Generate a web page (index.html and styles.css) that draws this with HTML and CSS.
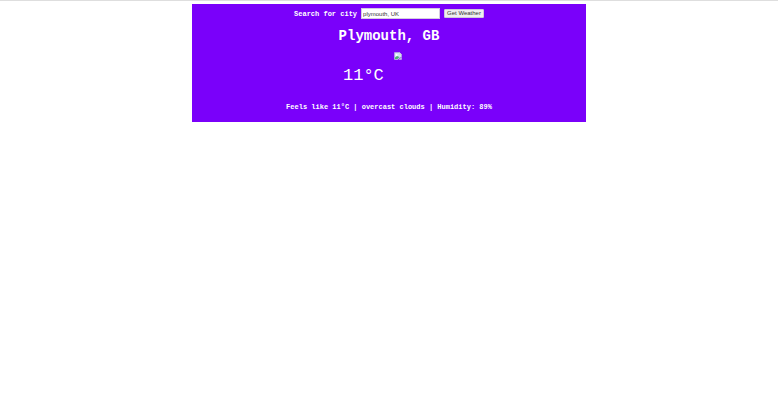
FILE: index.html
```html
<!DOCTYPE html>
<html lang="en">
<head>
<meta charset="utf-8">
<title>Weather</title>
<link rel="stylesheet" href="styles.css">
</head>
<body>
<main class="card">
  <form class="search">
    <label for="city">Search for city</label>
    <input id="city" type="text" value="plymouth, UK">
    <button type="button">Get Weather</button>
  </form>
  <h1 class="place">Plymouth, GB</h1>
  <div class="now">
    <svg class="icon" viewBox="0 0 16 16" aria-hidden="true">
      <path d="M1 1h10l4 4v5l-3 1-3 3-1 1H1z" fill="#d3e3f8" stroke="#b9c3cd"/>
      <path d="M11 1v4h4z" fill="#fff" stroke="#b9c3cd"/>
      <circle cx="5" cy="6" r="2" fill="#fff"/>
      <path d="M2 14v-3l4-3 5 2-4 4z" fill="#4cab75"/>
      <path d="M15 11v4H10z" fill="#d3e3f8" stroke="#b9c3cd"/>
    </svg>
    <p class="temp">11°C</p>
  </div>
  <p class="details">Feels like 11°C | overcast clouds | Humidity: 89%</p>
</main>
</body>
</html>
```
FILE: styles.css
```css
* {
  box-sizing: border-box;
}

body {
  margin: 0;
  padding-top: 3px;
  border-top: 1px solid #dedede;
  background: #fff;
  color: #fff;
  font: 7px/8px "Liberation Mono", monospace;
}

.card {
  width: 50.6%;
  margin: 0 auto;
  padding: 4px 4px 11px;
  background: #7a00fa;
  text-align: center;
}

.search {
  display: flex;
  justify-content: center;
  align-items: center;
  gap: 4px;
  font-weight: bold;
}

.search input {
  width: 79px;
  height: 11px;
  padding: 0 1px;
  border: 1px solid #d5cbe0;
  background: #fff;
  color: #333;
  font: 6px "Liberation Sans", sans-serif;
}

.search button {
  height: 9px;
  padding: 0 2px;
  border: 1px solid #d0c8dc;
  border-radius: 1px;
  background: #efefef;
  color: #333;
  font: 6px/7px "Liberation Sans", sans-serif;
}

.place {
  margin: 9px 0 8px;
  font-size: 14px;
  line-height: 16px;
}

.now {
  display: grid;
  grid-template-columns: 1fr 46px 18px calc(50% - 18px);
  row-gap: 8px;
}

.icon {
  grid-column: 3;
  justify-self: center;
  width: 8px;
  height: 8px;
}

.temp {
  grid-column: 2;
  grid-row: 2;
  margin: 0;
  font-size: 17px;
  line-height: 16px;
  text-align: left;
}

.details {
  margin: 19px 0 0;
  font-weight: bold;
}
```
